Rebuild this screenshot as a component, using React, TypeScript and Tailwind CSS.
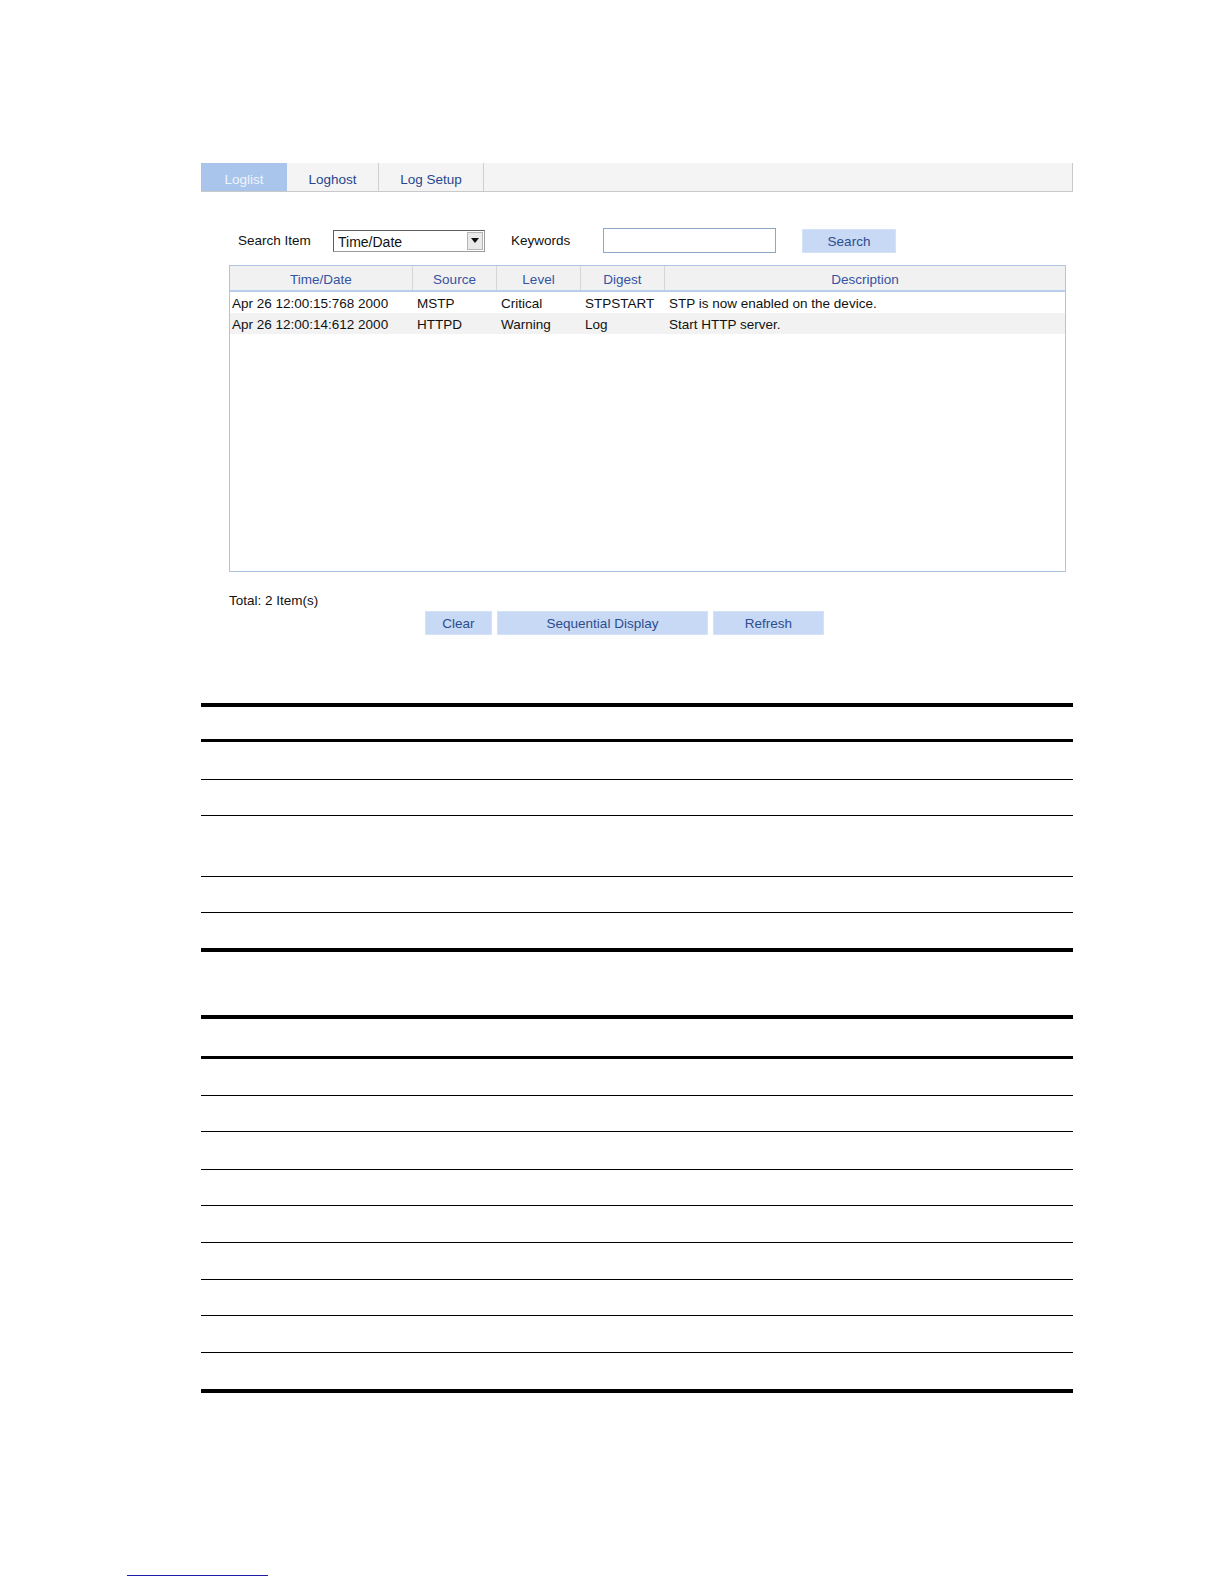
import type { ReactNode } from 'react';

// Log list page: tabs, search bar, log grid, then two blank ruled tables

const columns = [
  { label: 'Time/Date', width: 'w-[183px]' },
  { label: 'Source', width: 'w-[84px]' },
  { label: 'Level', width: 'w-[84px]' },
  { label: 'Digest', width: 'w-[84px]' },
  { label: 'Description', width: 'flex-1' },
];

const logs = [
  ['Apr 26 12:00:15:768 2000', 'MSTP', 'Critical', 'STPSTART', 'STP is now enabled on the device.'],
  ['Apr 26 12:00:14:612 2000', 'HTTPD', 'Warning', 'Log', 'Start HTTP server.'],
];

function Tab({ label, active, last }: { label: string; active?: boolean; last?: boolean }) {
  return (
    <div
      className={
        active
          ? 'w-[86px] h-full flex items-center justify-center pt-[6px] bg-[#a9c5eb] text-[#eef4fd]'
          : last
            ? 'w-[105px] h-full flex items-center justify-center pt-[6px] border-r border-[#cfcfcf] text-[#27478f]'
            : 'w-[92px] h-full flex items-center justify-center pt-[6px] border-r border-[#cfcfcf] text-[#27478f]'
      }
    >
      {label}
    </div>
  );
}

function BlueButton({ width, children }: { width: string; children: ReactNode }) {
  return (
    <button
      className={`${width} h-[24px] flex items-center justify-center pt-[3px] bg-[#c7d9f4] border border-[#d5e2f6] text-[#2d4d8e]`}
    >
      {children}
    </button>
  );
}

function RuledTable({ header, rows }: { header: string; rows: string[] }) {
  return (
    <div className="w-[872px] border-t-4 border-b-4 border-black">
      <div className={`${header} border-b-[3px] border-black`} />
      {rows.map((h, i) => (
        <div key={i} className={i < rows.length - 1 ? `${h} border-b border-black` : h} />
      ))}
    </div>
  );
}

export default function App() {
  return (
    <div className="w-[1224px] h-[1584px] overflow-hidden bg-white pt-[163px] font-['Liberation_Sans',Arial,sans-serif] text-[13.5px] text-[#111]">
      <div className="ml-[201px] w-[872px]">
        {/* Tabs */}
        <div className="h-[29px] flex bg-[#f4f4f4] border-b border-r border-[#c9c9c9]">
          <Tab label="Loglist" active />
          <Tab label="Loghost" />
          <Tab label="Log Setup" last />
        </div>

        {/* Search row */}
        <div className="mt-[36px] h-[25px] flex items-center">
          <span className="ml-[37px] w-[95px] pt-[2px]">Search Item</span>
          <div className="w-[152px] h-[22px] flex items-center justify-between border border-[#9a9a9a] border-t-[#5e5e5e] border-l-[#5e5e5e] bg-white">
            <span className="pl-[4px] pt-[3px] text-[14px]">Time/Date</span>
            <span className="mr-[1px] w-[16px] h-[18px] flex items-center justify-center bg-[#e9e9e9] border border-[#b5b5b5]">
              <svg width="8" height="5" viewBox="0 0 8 5">
                <path d="M0 0h8L4 5z" fill="#111" />
              </svg>
            </span>
          </div>
          <span className="ml-[26px] w-[92px] pt-[2px]">Keywords</span>
          <input className="w-[173px] h-[25px] border border-[#8ea7c4] bg-white outline-none" />
          <div className="ml-[26px]">
            <BlueButton width="w-[94px]">Search</BlueButton>
          </div>
        </div>

        {/* Log grid */}
        <div className="mt-[12px] ml-[28px] w-[837px] h-[307px] border border-[#abc5e3] bg-white">
          <div className="h-[26px] flex bg-[#f1f1f1] border-b-2 border-[#b7cfec] text-[#3553a3]">
            {columns.map((c, i) => (
              <div
                key={c.label}
                className={
                  i < columns.length - 1
                    ? `${c.width} flex items-center justify-center pt-[4px] border-r border-[#d6d6d6]`
                    : `${c.width} flex items-center justify-center pt-[4px]`
                }
              >
                {c.label}
              </div>
            ))}
          </div>
          {logs.map((row, r) => (
            <div key={r} className={r % 2 === 1 ? 'h-[21px] flex items-center pt-[3px] bg-[#f2f2f2]' : 'h-[21px] flex items-center pt-[3px]'}>
              {row.map((cell, i) => (
                <div key={i} className={`${columns[i].width} ${i === 0 ? 'pl-[2px]' : 'pl-[4px]'} whitespace-nowrap`}>
                  {cell}
                </div>
              ))}
            </div>
          ))}
        </div>

        <div className="mt-[21px] ml-[28px] leading-[16px]">Total: 2 Item(s)</div>

        <div className="mt-[2px] ml-[224px] flex gap-[5px]">
          <BlueButton width="w-[67px]">Clear</BlueButton>
          <BlueButton width="w-[211px]">Sequential Display</BlueButton>
          <BlueButton width="w-[111px]">Refresh</BlueButton>
        </div>

        {/* Ruled tables */}
        <div className="mt-[68px]">
          <RuledTable header="h-[35px]" rows={['h-[38px]', 'h-[36px]', 'h-[61px]', 'h-[36px]', 'h-[35px]']} />
        </div>
        <div className="mt-[63px]">
          <RuledTable
            header="h-[40px]"
            rows={['h-[37px]', 'h-[36px]', 'h-[38px]', 'h-[36px]', 'h-[37px]', 'h-[37px]', 'h-[36px]', 'h-[37px]', 'h-[36px]']}
          />
        </div>
      </div>

      {/* Link underline */}
      <a className="block mt-[182px] ml-[127px] w-[141px] h-0 border-t border-[#1d1da6]" href="#" />
    </div>
  );
}
